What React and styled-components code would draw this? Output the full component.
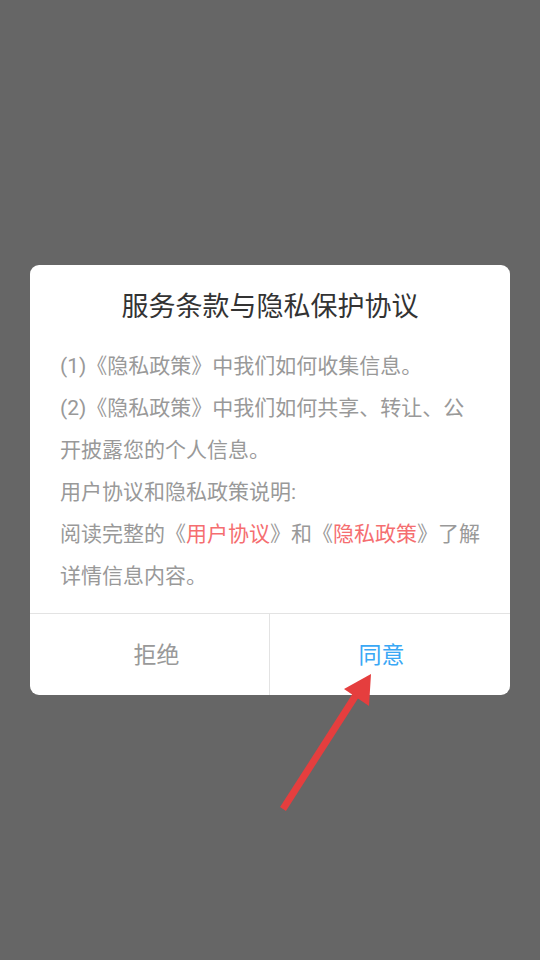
import React from 'react'
import styled, { createGlobalStyle } from 'styled-components'

const GlobalStyle = createGlobalStyle`
  html, body {
    margin: 0;
    padding: 0;
    background: #666666;
  }
  body {
    font-family: Roboto, "Noto Sans CJK SC", sans-serif;
  }
`

const Screen = styled.div`
  position: relative;
  width: 540px;
  height: 960px;
  display: flex;
  align-items: center;
  justify-content: center;
  background: #666666;
  overflow: hidden;
`

const Dialog = styled.div`
  width: 480px;
  background: #fff;
  border-radius: 9px;
  overflow: hidden;
  display: flex;
  flex-direction: column;
`

const Title = styled.h1`
  margin: 0;
  padding: 23px 0 0;
  font-size: 27px;
  font-weight: normal;
  line-height: 38px;
  color: #333;
  text-align: center;
`

const Body = styled.div`
  padding: 19px 30px 16px;
  font-size: 21px;
  line-height: 42px;
  color: #999;
`

const Line = styled.p`
  margin: 0;
  white-space: nowrap;
`

const Link = styled.span`
  color: #f56e70;
`

const Actions = styled.div`
  display: grid;
  grid-template-columns: 239px 1fr;
  border-top: 1px solid #e3e3e3;
  height: 81px;
`

const Action = styled.button`
  border: 0;
  background: none;
  font-family: inherit;
  font-size: 23px;
  color: ${p => (p.primary ? '#3aa8f5' : '#999')};
  border-left: ${p => (p.primary ? '1px solid #e3e3e3' : '0')};
  padding: ${p => (p.primary ? '0 17px 3px 0' : '0 0 3px 14px')};
  cursor: pointer;
`

const Arrow = styled.svg`
  position: absolute;
  left: 0;
  top: 0;
  pointer-events: none;
`

export default function App() {
  return (
    <Screen>
      <GlobalStyle />
      <Dialog>
        <Title>服务条款与隐私保护协议</Title>
        <Body>
          <Line>(1)《隐私政策》中我们如何收集信息。</Line>
          <Line>
            (2)《隐私政策》中我们如何共享、转让、公
            <br />
            开披露您的个人信息。
          </Line>
          <Line>用户协议和隐私政策说明:</Line>
          <Line>
            阅读完整的《<Link>用户协议</Link>》和《<Link>隐私政策</Link>》了解
            <br />
            详情信息内容。
          </Line>
        </Body>
        <Actions>
          <Action>拒绝</Action>
          <Action primary>同意</Action>
        </Actions>
      </Dialog>
      <Arrow width="540" height="960" viewBox="0 0 540 960">
        <line x1="283" y1="809" x2="356" y2="695" stroke="#e53e3e" strokeWidth="7" />
        <polygon points="371,674 344,689 369,706" fill="#e53e3e" />
      </Arrow>
    </Screen>
  )
}
